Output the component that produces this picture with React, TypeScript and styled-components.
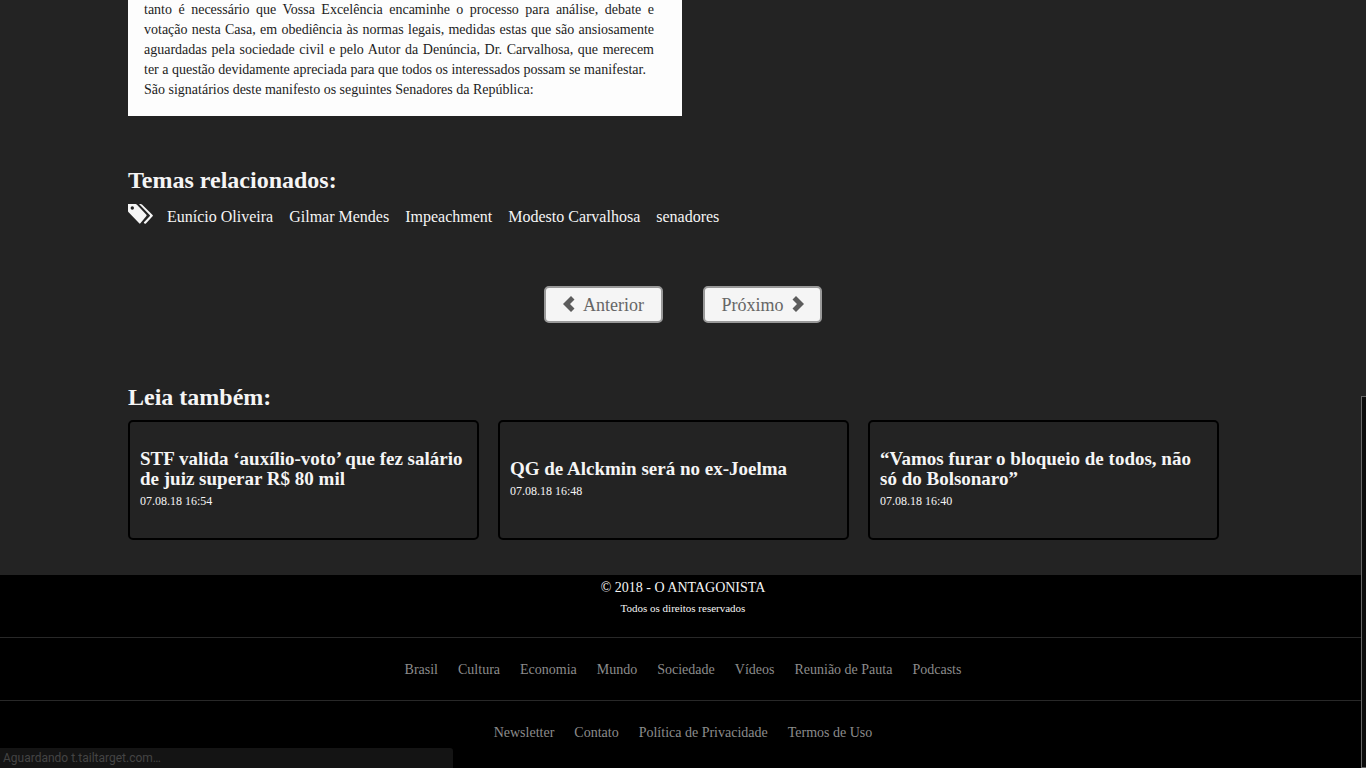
import React from "react";
import styled, { createGlobalStyle } from "styled-components";

const serif = '"Liberation Serif", "Times New Roman", serif';

const GlobalStyle = createGlobalStyle`
  *, *::before, *::after { box-sizing: border-box; }
  html { scrollbar-width: none; }
  body { margin: 0; background: #232323; color: #f5f5f5; font-family: ${serif}; }
  a { color: inherit; text-decoration: none; }
  ul, p, h2, h3 { margin: 0; padding: 0; }
  ul { list-style: none; }
`;

const Page = styled.div`
  min-height: 100vh;
  display: flex;
  flex-direction: column;
`;

const Container = styled.main`
  width: 100%;
  max-width: 1110px;
  margin: 0 auto;
  padding-bottom: 35px;
`;

const Letter = styled.section`
  max-width: 554px;
  padding: 0 28px 16px 16px;
  background: #fdfdfd;
  color: #1c1c22;
`;

const LetterLine = styled.p<{ $last?: boolean }>`
  font-size: 14px;
  line-height: 20px;
  text-align: justify;
  text-align-last: ${({ $last }) => ($last ? "left" : "justify")};
`;

const SectionTitle = styled.h2`
  font-size: 24px;
  line-height: 28px;
  font-weight: 700;
`;

const Topics = styled.section`
  padding-top: 50px;
`;

const TagRow = styled.div`
  display: flex;
  align-items: flex-start;
  gap: 14px;
  padding-top: 10px;
`;

const TagList = styled.ul`
  display: flex;
  flex-wrap: wrap;
  gap: 0 16px;
  padding-top: 3px;
  font-size: 16px;
  line-height: 20px;
`;

const Pager = styled.nav`
  display: flex;
  justify-content: center;
  gap: 40px;
  padding: 59px 0 60px;
`;

const PagerButton = styled.button`
  display: flex;
  align-items: center;
  justify-content: center;
  gap: 8px;
  min-width: 119px;
  height: 37px;
  padding: 0 12px;
  border: 2px solid #999;
  border-radius: 5px;
  background: #f5f5f5;
  color: #666;
  font-family: ${serif};
  font-size: 18px;
  line-height: 24px;
  cursor: pointer;
`;

const Cards = styled.div`
  display: grid;
  grid-template-columns: repeat(3, 1fr);
  gap: 19px;
  padding: 9px 19px 0 0;
`;

const Card = styled.article`
  display: flex;
  flex-direction: column;
  justify-content: center;
  min-height: 120px;
  padding: 2px 10px 0;
  border: 2px solid #000;
  border-radius: 5px;
`;

const CardTitle = styled.h3`
  font-size: 19px;
  line-height: 20px;
  font-weight: 700;
`;

const CardDate = styled.time`
  font-size: 12px;
  line-height: 24px;
`;

const Footer = styled.footer`
  flex: 1;
  background: #000;
  text-align: center;
`;

const Copyright = styled.div`
  padding: 2px 0 20px;
`;

const CopyLine = styled.p<{ $small?: boolean }>`
  font-size: ${({ $small }) => ($small ? 11 : 14)}px;
  line-height: ${({ $small }) => ($small ? 18 : 22)}px;
`;

const FooterNav = styled.nav`
  border-top: 1px solid #282828;
  padding: 22px 0 20px;
`;

const FooterLinks = styled.ul`
  display: flex;
  flex-wrap: wrap;
  justify-content: center;
  gap: 0 20px;
  color: #8c8c8c;
  font-size: 14px;
  line-height: 20px;
`;

const StatusBubble = styled.div`
  position: fixed;
  left: 0;
  bottom: 0;
  width: 453px;
  max-width: 100%;
  height: 20px;
  padding: 0 3px;
  border-radius: 0 3px 0 0;
  background: #141414;
  color: #444;
  font: 12px/20px Roboto, sans-serif;
`;

const ScrollThumb = styled.div`
  position: fixed;
  right: 0;
  bottom: 0;
  width: 5px;
  height: 372px;
  border: 1px solid #666;
  border-right: 0;
  background: #0c0c0c;
`;

const TagsIcon = () => (
  <svg width="25" height="20" viewBox="0 0 25 20" fill="#f5f5f5" aria-hidden="true">
    <path
      fillRule="evenodd"
      d="M0 0H7.600Q8.300 0 9 .7L18.400 10.700Q19 11.400 18.400 12L12.400 19.300Q11.800 20 11.200 19.300L.6 8.300Q0 7.700 0 7ZM4.300 2.300A1.700 1.700 0 1 0 4.300 5.700 1.700 1.700 0 1 0 4.300 2.300Z"
    />
    <path d="M11 0H12.600Q13.400 0 14 .6L24.600 10.900Q25.200 11.500 24.600 12.200L17.900 19.500Q17.200 20.200 16.500 19.500L15.700 18.600 21.700 12.200Q22.300 11.500 21.700 10.900Z" />
  </svg>
);

const ChevronIcon = ({ next }: { next?: boolean }) => (
  <svg width="12" height="18" viewBox="0 0 12 18" fill="#5c5c5c" aria-hidden="true">
    <path d={next ? "M4 0 12 8 4 16 .5 12.500 5 8 .5 3.500Z" : "M8 0 0 8 8 16 11.500 12.500 7 8 11.500 3.500Z"} />
  </svg>
);

const letterLines = [
  "tanto é necessário que Vossa Excelência encaminhe o processo para análise, debate e",
  "votação nesta Casa, em obediência às normas legais, medidas estas que são ansiosamente",
  "aguardadas pela sociedade civil e pelo Autor da Denúncia, Dr. Carvalhosa, que merecem",
];

const closingLines = [
  "ter a questão devidamente apreciada para que todos os interessados possam se manifestar.",
  "São signatários deste manifesto os seguintes Senadores da República:",
];

const tags = ["Eunício Oliveira", "Gilmar Mendes", "Impeachment", "Modesto Carvalhosa", "senadores"];

const related = [
  { title: "STF valida ‘auxílio-voto’ que fez salário de juiz superar R$ 80 mil", date: "07.08.18 16:54" },
  { title: "QG de Alckmin será no ex-Joelma", date: "07.08.18 16:48" },
  { title: "“Vamos furar o bloqueio de todos, não só do Bolsonaro”", date: "07.08.18 16:40" },
];

const footerMenus = [
  {
    label: "Editorias",
    links: ["Brasil", "Cultura", "Economia", "Mundo", "Sociedade", "Vídeos", "Reunião de Pauta", "Podcasts"],
  },
  { label: "Institucional", links: ["Newsletter", "Contato", "Política de Privacidade", "Termos de Uso"] },
];

export default function App() {
  return (
    <Page>
      <GlobalStyle />
      <Container>
        <Letter>
          {letterLines.map((line) => (
            <LetterLine key={line}>{line}</LetterLine>
          ))}
          {closingLines.map((line) => (
            <LetterLine key={line} $last>
              {line}
            </LetterLine>
          ))}
        </Letter>

        <Topics>
          <SectionTitle>Temas relacionados:</SectionTitle>
          <TagRow>
            <TagsIcon />
            <TagList>
              {tags.map((tag) => (
                <li key={tag}>
                  <a href="#">{tag}</a>
                </li>
              ))}
            </TagList>
          </TagRow>
        </Topics>

        <Pager>
          <PagerButton type="button">
            <ChevronIcon />
            Anterior
          </PagerButton>
          <PagerButton type="button">
            Próximo
            <ChevronIcon next />
          </PagerButton>
        </Pager>

        <section>
          <SectionTitle>Leia também:</SectionTitle>
          <Cards>
            {related.map((item) => (
              <Card key={item.title}>
                <CardTitle>
                  <a href="#">{item.title}</a>
                </CardTitle>
                <CardDate>{item.date}</CardDate>
              </Card>
            ))}
          </Cards>
        </section>
      </Container>

      <Footer>
        <Copyright>
          <CopyLine>© 2018 - O ANTAGONISTA</CopyLine>
          <CopyLine $small>Todos os direitos reservados</CopyLine>
        </Copyright>
        {footerMenus.map((menu) => (
          <FooterNav key={menu.label} aria-label={menu.label}>
            <FooterLinks>
              {menu.links.map((link) => (
                <li key={link}>
                  <a href="#">{link}</a>
                </li>
              ))}
            </FooterLinks>
          </FooterNav>
        ))}
      </Footer>

      <StatusBubble>Aguardando t.tailtarget.com…</StatusBubble>
      <ScrollThumb />
    </Page>
  );
}
